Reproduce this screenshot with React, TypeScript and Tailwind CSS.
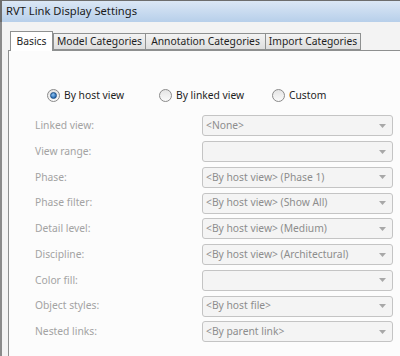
import React from "react";

const FONT = { fontFamily: '"Noto Sans", "Open Sans", sans-serif' };

const ROWS: { label: string; value: string }[] = [
  { label: "Linked view:", value: "<None>" },
  { label: "View range:", value: "" },
  { label: "Phase:", value: "<By host view> (Phase 1)" },
  { label: "Phase filter:", value: "<By host view> (Show All)" },
  { label: "Detail level:", value: "<By host view> (Medium)" },
  { label: "Discipline:", value: "<By host view> (Architectural)" },
  { label: "Color fill:", value: "" },
  { label: "Object styles:", value: "<By host file>" },
  { label: "Nested links:", value: "<By parent link>" },
];

function Radio({ checked, label }: { checked?: boolean; label: string }) {
  return (
    <label className="flex items-center gap-[4px] text-[10.3px] text-[#1e1e1e]">
      <span className="flex h-[13px] w-[13px] items-center justify-center rounded-full border border-[#8a8a8a] bg-gradient-to-b from-[#e4e4e4] to-[#fafafa]">
        {checked && (
          <span className="h-[7px] w-[7px] rounded-full border border-[#1b4f86] bg-[radial-gradient(circle_at_40%_35%,#8fc3f0,#2a6db5_70%)]" />
        )}
      </span>
      {label}
    </label>
  );
}

function Combo({ value }: { value: string }) {
  return (
    <div className="flex h-[21px] w-[191px] items-center justify-between rounded-[3px] border border-[#c4c4c4] bg-[#f4f4f4] pl-[3px] pr-[6px] text-[10.3px] text-[#8d8d8d]">
      <span>{value}</span>
      <svg width="7" height="4" viewBox="0 0 7 4">
        <path d="M0 0h7L3.5 4z" fill="#a8a8a8" />
      </svg>
    </div>
  );
}

function Tab({ label, w, active }: { label: string; w: string; active?: boolean }) {
  return active ? (
    <div
      className={`relative z-10 -mb-px mr-[1px] flex h-[20px] shrink-0 items-center justify-center whitespace-nowrap border border-b-0 border-[#8e9090] bg-white text-[10.3px] text-[#1e1e1e] ${w}`}
    >
      {label}
    </div>
  ) : (
    <div
      className={`-ml-px flex h-[17px] shrink-0 items-center justify-center whitespace-nowrap border border-[#8e9090] bg-gradient-to-b from-[#f3f3f3] to-[#dedede] text-[10.3px] text-[#1e1e1e] ${w}`}
    >
      {label}
    </div>
  );
}

export default function App() {
  return (
    <div className="h-[356px] w-[400px] overflow-hidden bg-[#f0f0f0]" style={FONT}>
      <div className="flex h-[22px] items-center border-l-2 border-t border-[#6d6d6d] bg-gradient-to-b from-[#dbe7f5] to-[#b7cfea] pl-[4px] text-[11.2px] text-[#1a1a1a]">
        RVT Link Display Settings
      </div>
      <div className="flex h-[334px] flex-col border-l-2 border-[#8a8a8a] bg-[#f3f3f3] pl-[6px] pt-[9px]">
        <div className="flex items-end pl-[2px]">
          <Tab label="Basics" w="w-[43px]" active />
          <Tab label="Model Categories" w="w-[93px]" />
          <Tab label="Annotation Categories" w="w-[121px]" />
          <Tab label="Import Categories" w="w-[96px]" />
        </div>
        <div className="flex-1 border-l border-t border-[#8e9090] bg-[#fcfcfc]">
          <div className="flex pl-[38px] pt-[37px]">
            <div className="w-[112px]">
              <Radio checked label="By host view" />
            </div>
            <div className="w-[113px]">
              <Radio label="By linked view" />
            </div>
            <Radio label="Custom" />
          </div>
          <div className="mt-[12px] flex flex-col gap-[4.75px] pl-[26px]">
            {ROWS.map((r) => (
              <div key={r.label} className="flex items-center">
                <div className="w-[167px] text-[10.3px] text-[#a3a3a3]">{r.label}</div>
                <Combo value={r.value} />
              </div>
            ))}
          </div>
        </div>
      </div>
    </div>
  );
}
